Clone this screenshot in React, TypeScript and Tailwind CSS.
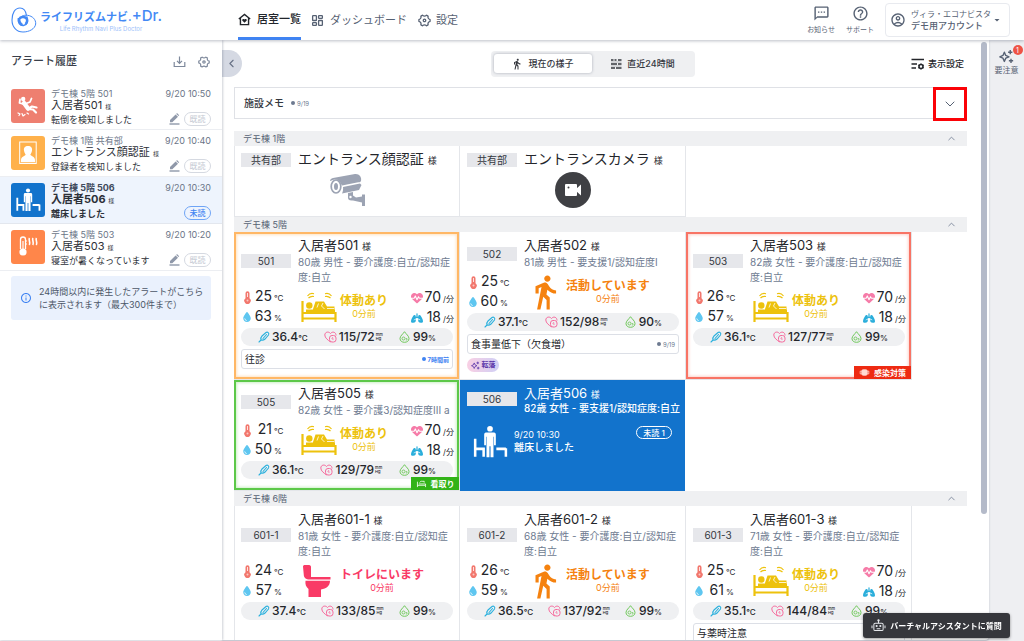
import type { ReactNode } from "react";
import { ChevronDown, ChevronLeft, ChevronUp, LayoutDashboard } from "lucide-react";
import { FaDroplet, FaHeartPulse, FaLungs } from "react-icons/fa6";
import {
  MdArrowDropDown,
  MdDirectionsWalk,
  MdHelpOutline,
  MdInfoOutline,
  MdOutlineAccountCircle,
  MdOutlineTextsms,
} from "react-icons/md";
import { RiSettings4Line } from "react-icons/ri";

/* ---------- drawings ---------- */

function LogoMark() {
  return (
    <svg viewBox="0 0 26 26" className="size-[26px] shrink-0" fill="none" stroke="#4389f5" aria-hidden="true">
      <path d="M12 25C5.500 25 1 20 1 13C1 6 4 1 9 1C13.500 1 15 5 15.500 8.500" strokeWidth="1.100" />
      <path d="M8 13C9 9.500 12.500 7.800 16.500 8.300C21.500 9 25 12.500 24.700 17C24 22 18 25 12 25" strokeWidth="1" />
      <path d="M7.500 11.500C6.500 15.500 9 18.800 12.500 18.500C16 18 17.800 14 15.500 9.500" strokeWidth="1.700" />
      <path d="M8.200 12C9.500 9.800 13 9.200 15 11C16.800 13 16 15.500 14.500 17" strokeWidth="2.400" />
      <path d="M8 11C8 14 9 17 11.500 18" strokeWidth="2.400" />
    </svg>
  );
}

function HomeHeartIcon() {
  return (
    <svg viewBox="0 0 24 24" className="size-[13px]" fill="none" stroke="currentColor" strokeWidth="2.600" aria-hidden="true">
      <path d="M1.500 11L12 2.500L22.500 11M4.500 9V21.500H19.500V9" />
      <path d="M12 18L8.200 14.300C6.500 12.300 9.500 9.500 12 12C14.500 9.500 17.500 12.300 15.800 14.300Z" fill="currentColor" stroke="none" />
    </svg>
  );
}

function DownloadIcon() {
  return (
    <svg viewBox="0 0 13 13" className="size-[13px]" fill="none" stroke="currentColor" strokeWidth="1.200" aria-hidden="true">
      <path d="M6.500 1.500V8M4 5.800L6.500 8.300L9 5.800M1.200 7V11.500H11.800V7" />
    </svg>
  );
}

function TimelineIcon() {
  return (
    <svg viewBox="0 0 12 12" className="size-[12px]" stroke="currentColor" strokeWidth="1.700" aria-hidden="true">
      <path d="M1 2H3.500M4.500 2H6.500M8 2H11.500M1 6H7M8 6H11.500M1 10H5M6 10H11.500" />
      <path d="M1 4H11.500M1 8H11.500" strokeWidth="0.300" />
    </svg>
  );
}

function DisplaySettingsIcon() {
  return (
    <svg viewBox="0 0 14 12" className="h-[12px] w-[14px]" fill="none" stroke="currentColor" strokeWidth="1.300" aria-hidden="true">
      <path d="M0.500 1.500H13M0.500 6H6M0.500 10H5" />
      <circle cx="10" cy="8.500" r="2" strokeWidth="1.600" />
      <path d="M10 5.400V6.200M10 10.800V11.600M7.300 7L8 7.300M12 9.700L12.700 10M12.700 7L12 7.300M8 9.700L7.300 10" />
    </svg>
  );
}

function SparkleIcon({ className }: { className: string }) {
  return (
    <svg viewBox="0 0 14 14" className={className} fill="none" stroke="currentColor" strokeWidth="1.300" aria-hidden="true">
      <path d="M5 3L6.300 6L9.300 7.300L6.300 8.600L5 11.600L3.700 8.600L0.800 7.300L3.700 6Z" strokeLinejoin="round" />
      <path d="M10.500 1V5M8.500 3H12.500M11.200 9V13M9.200 11H13.200" />
    </svg>
  );
}

function PencilIcon() {
  return (
    <svg viewBox="0 0 11 12" className="h-[12px] w-[11px]" fill="#8f98a9" aria-hidden="true">
      <path d="M1 9.300V7L6.600 1.400L9 3.700L3.300 9.300ZM7.200 0.900L8 0.100L10.200 2.300L9.500 3.100Z" />
      <path d="M0.500 10.300H10.500V11.700H0.500Z" />
    </svg>
  );
}

function FallIcon() {
  return (
    <svg viewBox="0 0 34 34" className="size-[34px]" fill="none" stroke="#fff" strokeLinecap="round" strokeLinejoin="round" aria-hidden="true">
      <circle cx="12.200" cy="10" r="2.200" fill="#fff" stroke="none" />
      <path d="M13 14L17 19.500" strokeWidth="4.500" />
      <path d="M12 15L8.500 14L9 10.500M15 14.500L19 13L20.500 9.500" strokeWidth="1.800" />
      <path d="M17 20L21 17.500L25.500 18.500M17 20L22 20.500L25 23.500" strokeWidth="2.200" />
      <path d="M7 24L9 25L8 26.500M11 24.500L12 27L14 25.500M16 24L17.500 25" strokeWidth="1.200" />
    </svg>
  );
}

function FaceIcon() {
  return (
    <svg viewBox="0 0 34 34" className="size-[34px]" aria-hidden="true">
      <rect x="8.700" y="6" width="16.500" height="21.500" fill="none" stroke="#fff" strokeWidth="1" />
      <path d="M17 10C20 10 21.500 12 21 14.500C20.700 16.500 19.800 18 19.300 18.700C20.500 20.500 24 20.500 24 24V26.300H10V24C10 20.500 13.500 20.500 14.700 18.700C14.200 18 13.300 16.500 13 14.500C12.500 12 14 10 17 10Z" fill="#fff" />
    </svg>
  );
}

function LeaveBedIcon({ className }: { className: string }) {
  return (
    <svg viewBox="0 0 34 34" className={className} fill="none" stroke="#fff" aria-hidden="true">
      <path d="M3 14V31M3 23.500H11V31M23 23.500H32M32 23V31" strokeWidth="2.400" />
      <circle cx="17" cy="4.500" r="2.700" fill="#fff" stroke="none" />
      <path d="M11.500 10C11.500 8.500 12.500 8 14 8H20C21.500 8 22.500 8.500 22.500 10V20H20.800V12H20.300V31.500H17.500V21H16.500V31.500H13.700V12H13.200V20H11.500Z" fill="#fff" stroke="none" />
    </svg>
  );
}

function HotRoomIcon() {
  return (
    <svg viewBox="0 0 34 34" className="size-[34px]" fill="none" stroke="#fff" aria-hidden="true">
      <path d="M9.500 19V9.500A2.500 2.500 0 0 1 14.500 9.500V19" strokeWidth="1.300" />
      <circle cx="12" cy="22" r="3.600" fill="#fff" stroke="none" />
      <path d="M12 22V11M14 11H16M14 14H16" strokeWidth="1.200" />
      <path d="M18.500 8C17 10 20 12 18.300 15M22 8C20.500 10 23.500 12 21.800 15M25.500 8C24 10 27 12 25.300 15" strokeWidth="1.600" />
    </svg>
  );
}

function CctvIcon() {
  return (
    <svg viewBox="0 0 38 34" className="h-[34px] w-[38px]" fill="#9ca3b3" aria-hidden="true">
      <path d="M5 5L27 1C31 0.500 34 4 33 8C32.500 9.500 31 9 29 9.500L14 12.500C11 6 8 5 2 8C2 6.500 3 5.500 5 5Z" />
      <path d="M15 14L32 10.500L33.500 12L31 17L14 20.500C15 18.500 15.300 16 15 14Z" />
      <ellipse cx="8" cy="13.500" rx="4.800" ry="6.500" fill="none" stroke="#9ca3b3" strokeWidth="1.700" />
      <ellipse cx="8" cy="13.500" rx="2" ry="3.500" />
      <path d="M20 20L25 19V22.500L28 24.500L34 23.500V21.500H37V33H34V29.500L25 27.500C21 28 19.500 26 20 23.500Z" />
      <circle cx="22.500" cy="24" r="1.200" fill="#fff" />
    </svg>
  );
}

function VideoIcon() {
  return (
    <svg viewBox="0 0 36 36" className="size-[36px]" aria-hidden="true">
      <circle cx="18" cy="18" r="18" fill="#3f4044" />
      <rect x="10" y="12" width="12" height="12" rx="1" fill="#fff" />
      <path d="M21 17L26 12.500V23.500L21 19Z" fill="#fff" />
      <circle cx="13.500" cy="15.500" r="1" fill="#3f4044" />
    </svg>
  );
}

function BedIcon() {
  return (
    <svg viewBox="0 0 36 32" className="h-[32px] w-[36px]" fill="none" stroke="#edc20c" strokeLinejoin="round" aria-hidden="true">
      <path d="M6.500 5C8 3 10.500 2 13 2.800M7.500 7C9 5.500 11 5 13 5.500M24 2.800C26.500 2 29 3 30.500 5M24 5.500C26 5 28 5.500 29.500 7" strokeWidth="1.200" />
      <path d="M1.500 10V31M1.500 22H34.500M2 27.500H34.500M34.500 21V31" strokeWidth="2.200" />
      <circle cx="8.300" cy="14.500" r="3.200" fill="#edc20c" stroke="none" />
      <path d="M5 18.500H34V22H5Z" fill="#edc20c" stroke="none" />
      <path d="M12 18L14.500 10.500H23L26 15.500H33.500V19H12Z" fill="#edc20c" stroke="none" />
      <path d="M16 16.500L17.500 12.500M22 12L20.500 15L23.500 18M26 17.500H33" stroke="#fff" strokeWidth="0.800" />
    </svg>
  );
}

function ToiletIcon() {
  return (
    <svg viewBox="0 0 36 34" className="h-[34px] w-[36px]" fill="#f93a66" aria-hidden="true">
      <path d="M2 2.500C2 1.500 2.800 1 4 1H8C9.500 1 10 2 10 3V13H29.500V15.500H9C4.500 15.500 3 13.500 2.800 11Z" />
      <path d="M4.500 16.800H29C29 22 25.500 24.500 20 25.500V33H7.500V25C5 23 4 20.500 4.500 16.800Z" />
    </svg>
  );
}

function ThermometerIcon() {
  return (
    <svg viewBox="0 0 9 13" className="h-[13px] w-[9px] shrink-0" aria-hidden="true">
      <path d="M2.500 2.300A2 2 0 0 1 6.500 2.300V7.200A3.200 3.200 0 1 1 2.500 7.200Z" fill="#f2776d" />
      <path d="M4.500 2V6" stroke="#fff" strokeWidth="0.800" />
      <circle cx="4.500" cy="9.600" r="1" fill="#fff" fillOpacity="0.600" />
    </svg>
  );
}

function BodyTempIcon() {
  return (
    <svg viewBox="0 0 12 12" className="size-[12px]" fill="none" stroke="#2ab0dd" strokeLinecap="round" aria-hidden="true">
      <path d="M1 11L3 9M3 9C2.500 7 3 6 4 5L8 1.500C9.500 0.500 11.500 2 10.500 4L7 8C6 9 5 9.500 3 9Z" strokeWidth="1.100" />
      <path d="M5 7.500L8.500 3.500" strokeWidth="1.100" />
    </svg>
  );
}

function BloodPressureIcon() {
  return (
    <svg viewBox="0 0 13 12" className="h-[12px] w-[13px]" fill="none" stroke="#f66b9d" strokeWidth="1" aria-hidden="true">
      <path d="M6.500 11C4 9 0.800 7 0.800 4C0.800 1 4.500 0 6.500 2.500C8.500 0 12 1 12 4.500" />
      <rect x="5.500" y="4.500" width="6.500" height="6.500" rx="2.500" />
      <path d="M7.500 7.500L8.700 6.500L9 9" strokeWidth="0.800" />
    </svg>
  );
}

function OxygenIcon() {
  return (
    <svg viewBox="0 0 11 12" className="h-[12px] w-[11px]" fill="none" stroke="#6fc85a" strokeWidth="1" aria-hidden="true">
      <path d="M5.500 0.700C7 3 10 5 10 7.500C10 10 8 11.300 5.500 11.300C3 11.300 1 10 1 7.500C1 5 4 3 5.500 0.700Z" />
      <circle cx="4.500" cy="7.500" r="1.500" strokeWidth="0.900" />
      <path d="M6.800 7.500H8V9H6.800" strokeWidth="0.700" />
    </svg>
  );
}

function MaskIcon() {
  return (
    <svg viewBox="0 0 12 10" className="h-[9px] w-[11px]" fill="none" stroke="#ffd9d2" aria-hidden="true">
      <rect x="3" y="2" width="6" height="6" rx="1.500" fill="#ffd9d2" />
      <path d="M3 3.500H1.200V6.500H3M9 3.500H10.800V6.500H9" strokeWidth="0.900" />
    </svg>
  );
}

function CareBedIcon() {
  return (
    <svg viewBox="0 0 12 10" className="h-[9px] w-[11px]" fill="none" stroke="#fff" strokeWidth="0.900" aria-hidden="true">
      <path d="M1.500 9V3M1.500 7H10.500V9M3 5.500H10.500V7M4 4C5 1.500 7 3 9 2.500L9 4" />
    </svg>
  );
}

function RobotIcon() {
  return (
    <svg viewBox="0 0 16 14" className="h-[13px] w-[15px]" fill="none" stroke="#e5e7eb" strokeWidth="1.100" aria-hidden="true">
      <rect x="3" y="4.500" width="10" height="8" rx="1.500" />
      <path d="M8 4.500V2M1 7V10M15 7V10M6 10.500H10" />
      <circle cx="8" cy="1.500" r="0.700" fill="#e5e7eb" />
      <circle cx="6" cy="7.500" r="0.600" fill="#e5e7eb" />
      <circle cx="10" cy="7.500" r="0.600" fill="#e5e7eb" />
    </svg>
  );
}

/* ---------- header ---------- */

function Header() {
  return (
    <header className="z-20 flex h-10 shrink-0 items-stretch bg-white pr-[14px] pl-[11px] shadow-[0_1px_3px_rgba(60,70,95,0.35)]">
      <a href="#home" className="flex w-[227px] items-center gap-[3px] text-[#4389f5]">
        <LogoMark />
        <span className="flex flex-col">
          <span className="flex items-baseline text-[11px] leading-[15px] font-bold whitespace-nowrap">
            ライフリズムナビ.<span className="text-[15px] font-medium">+Dr.</span>
          </span>
          <span className="text-center text-[6px] leading-[7px] whitespace-nowrap text-[#9cc1fa]">Life Rhythm Navi Plus Doctor</span>
        </span>
      </a>
      <nav className="flex gap-[10px] text-[11px] text-[#566173]">
        <a href="#rooms" className="flex items-center gap-[6px] border-b-3 border-[#3f83f2] pt-[2px] font-medium whitespace-nowrap text-[#22252b]">
          <HomeHeartIcon />
          居室一覧
        </a>
        <a href="#dashboard" className="flex items-center gap-[6px] whitespace-nowrap">
          <LayoutDashboard size={13} strokeWidth={2.4} />
          ダッシュボード
        </a>
        <a href="#settings" className="flex items-center gap-[4px] whitespace-nowrap">
          <RiSettings4Line size={15} />
          設定
        </a>
      </nav>
      <div className="ml-auto flex items-center gap-[11px] text-[#566173]">
        <button type="button" className="flex flex-col items-center gap-[3px] text-[7px] leading-[10px]">
          <MdOutlineTextsms size={17} />
          お知らせ
        </button>
        <button type="button" className="flex flex-col items-center gap-[3px] text-[7px] leading-[10px]">
          <MdHelpOutline size={17} />
          サポート
        </button>
        <button type="button" className="flex h-[34px] items-center rounded border border-[#e8eaef] pr-[6px] pl-[4px] text-left">
          <MdOutlineAccountCircle size={16} />
          <span className="flex flex-col pl-[5px] whitespace-nowrap">
            <span className="text-[8px] leading-[12px]">ヴィラ・エコナビスタ</span>
            <span className="text-[9px] leading-[12px] font-medium">デモ用アカウント</span>
          </span>
          <MdArrowDropDown size={12} />
        </button>
      </div>
    </header>
  );
}

/* ---------- alert history ---------- */

interface Alert {
  place: string;
  time: string;
  name: string;
  message: string;
  tile: string;
  icon: ReactNode;
  unread?: boolean;
}

const alerts: Alert[] = [
  { place: "デモ棟 5階 501", time: "9/20 10:50", name: "入居者501", message: "転倒を検知しました", tile: "bg-[#ee7f70]", icon: <FallIcon /> },
  { place: "デモ棟 1階 共有部", time: "9/20 10:40", name: "エントランス顔認証", message: "登録者を検知しました", tile: "bg-[#ffb14b]", icon: <FaceIcon /> },
  { place: "デモ棟 5階 506", time: "9/20 10:30", name: "入居者506", message: "離床しました", tile: "bg-[#1273cc]", icon: <LeaveBedIcon className="size-[26px]" />, unread: true },
  { place: "デモ棟 5階 503", time: "9/20 10:20", name: "入居者503", message: "寝室が暑くなっています", tile: "bg-[#ff864a]", icon: <HotRoomIcon /> },
];

function AlertRow({ alert }: { alert: Alert }) {
  const unread = alert.unread;
  return (
    <li className={unread ? "flex h-[47px] gap-[6px] border-b border-[#e3e7ee] bg-[#eef4fd] px-[11px] pt-[6px] font-bold" : "flex h-[47px] gap-[6px] border-b border-[#eceef2] px-[11px] pt-[6px]"}>
      <span className={`flex size-[34px] shrink-0 items-center justify-center rounded-[3px] ${alert.tile}`}>{alert.icon}</span>
      <div className="min-w-0 flex-1">
        <div className="flex justify-between text-[9px] leading-[9px] whitespace-nowrap text-[#6b7587]">
          <span className={unread ? "text-[#3f4a5c]" : ""}>{alert.place}</span>
          <time className="font-normal">{alert.time}</time>
        </div>
        <div className="flex items-end justify-between">
          <div className="whitespace-nowrap text-[#2c3038]">
            <p className="text-[11px] leading-[14px]">
              {alert.name} <span className="text-[6px] font-normal">様</span>
            </p>
            <p className="text-[9px] leading-[12px]">{alert.message}</p>
          </div>
          <div className="flex items-center gap-[4px]">
            {!unread && (
              <button type="button" aria-label="メモを編集">
                <PencilIcon />
              </button>
            )}
            <button
              type="button"
              className={
                unread
                  ? "h-[14px] w-[27px] rounded-full border border-[#6ea4f6] text-[8px] leading-[12px] font-medium text-[#3f83f2]"
                  : "h-[14px] w-[27px] rounded-full border border-[#d5d9e1] text-[8px] leading-[12px] text-[#c3c8d2]"
              }
            >
              {unread ? "未読" : "既読"}
            </button>
          </div>
        </div>
      </div>
    </li>
  );
}

function AlertPanel() {
  return (
    <aside className="z-10 w-[222px] shrink-0 bg-white shadow-[1px_0_2px_rgba(60,70,95,0.25)]">
      <div className="flex h-[43px] items-center px-[11px]">
        <h2 className="text-[11px] font-medium text-[#3a3f4a]">アラート履歴</h2>
        <div className="ml-auto flex items-center gap-[11px] text-[#7d889b]">
          <button type="button" aria-label="ダウンロード"><DownloadIcon /></button>
          <button type="button" aria-label="アラート設定"><RiSettings4Line size={14} /></button>
        </div>
      </div>
      <ul>
        {alerts.map((a) => (
          <AlertRow key={a.time} alert={a} />
        ))}
      </ul>
      <div className="mx-[11px] mt-[5px] flex h-[44px] items-center gap-[7px] rounded-[3px] bg-[#eaf1fd] pl-[9px] text-[9px] leading-[13px] text-[#4c5768]">
        <MdInfoOutline size={12} className="shrink-0 text-[#3f83f2]" />
        <p className="whitespace-nowrap">
          24時間以内に発生したアラートがこちら
          <br />
          に表示されます（最大300件まで）
        </p>
      </div>
    </aside>
  );
}

/* ---------- rooms ---------- */

type Activity = "bed" | "walk" | "toilet";

interface Room {
  room: string;
  name: string;
  detail: string;
  temp: number;
  humidity: number;
  activity: Activity;
  breath?: boolean;
  body: string;
  pressure: string;
  oxygen: number;
  note?: { text: string; when?: string; fresh?: boolean };
  tag?: string;
  frame?: "orange" | "red" | "green";
}

const floor5: Room[] = [
  { room: "501", name: "入居者501", detail: "80歳 男性 - 要介護度:自立/認知症\n度:自立", temp: 25, humidity: 63, activity: "bed", breath: true, body: "36.4", pressure: "115/72", oxygen: 99, note: { text: "往診", when: "7時間前", fresh: true }, frame: "orange" },
  { room: "502", name: "入居者502", detail: "81歳 男性 - 要支援1/認知症度I", temp: 25, humidity: 60, activity: "walk", body: "37.1", pressure: "152/98", oxygen: 90, note: { text: "食事量低下（欠食増）", when: "9/19" }, tag: "転落" },
  { room: "503", name: "入居者503", detail: "82歳 女性 - 要介護度:自立/認知症\n度:自立", temp: 26, humidity: 57, activity: "bed", breath: true, body: "36.1", pressure: "127/77", oxygen: 99, frame: "red" },
  { room: "505", name: "入居者505", detail: "82歳 女性 - 要介護3/認知症度III a", temp: 21, humidity: 50, activity: "bed", breath: true, body: "36.1", pressure: "129/79", oxygen: 99, frame: "green" },
];

const floor6: Room[] = [
  { room: "601-1", name: "入居者601-1", detail: "81歳 女性 - 要介護度:自立/認知症\n度:自立", temp: 24, humidity: 57, activity: "toilet", body: "37.4", pressure: "133/85", oxygen: 99 },
  { room: "601-2", name: "入居者601-2", detail: "68歳 女性 - 要介護度:自立/認知症\n度:自立", temp: 26, humidity: 59, activity: "walk", body: "36.5", pressure: "137/92", oxygen: 99 },
  { room: "601-3", name: "入居者601-3", detail: "71歳 女性 - 要介護度:自立/認知症\n度:自立", temp: 25, humidity: 61, activity: "bed", breath: true, body: "35.1", pressure: "144/84", oxygen: 99, note: { text: "与薬時注意" } },
];

const activities: Record<Activity, { label: string; color: string; icon: ReactNode }> = {
  bed: { label: "体動あり", color: "text-[#edc20c]", icon: <BedIcon /> },
  walk: { label: "活動しています", color: "text-[#f5820f]", icon: <MdDirectionsWalk size={38} className="shrink-0" /> },
  toilet: { label: "トイレにいます", color: "text-[#f93a66]", icon: <ToiletIcon /> },
};

const frames = {
  orange: "shadow-[inset_0_0_0_2px_#ffb765,inset_0_0_3px_3px_#ffe3c2]",
  red: "shadow-[inset_0_0_0_2px_#f87465,inset_0_0_3px_3px_#fdd3cd]",
  green: "shadow-[inset_0_0_0_2px_#5cc848,inset_0_0_3px_3px_#cdf0c6]",
};

function RoomLabel({ children }: { children: ReactNode }) {
  return <span className="flex h-[14px] w-[50px] shrink-0 items-center justify-center bg-[#e6e7eb] text-[10px] leading-[14px] text-[#34373e]">{children}</span>;
}

function Honorific() {
  return <span className="text-[9px]">様</span>;
}

function Reading({ icon, value, unit }: { icon: ReactNode; value: string | number; unit: string }) {
  return (
    <div className="flex h-5 items-center">
      <span className="flex w-[12px] shrink-0 justify-center">{icon}</span>
      <p className="ml-auto flex items-baseline gap-[2px] text-[14px] leading-5 whitespace-nowrap">
        {value}
        <span className="w-[10px] text-[8px]">{unit}</span>
      </p>
    </div>
  );
}

function RoomCard({ data }: { data: Room }) {
  const act = activities[data.activity];
  return (
    <article className={`relative min-h-[111px] w-[226px] border-r border-b border-[#e4e6ea] pt-[5px] pr-[6px] pb-[7px] pl-[7px] text-[#24262b] ${data.frame ? frames[data.frame] : ""}`}>
      <div className="flex items-center gap-[7px]">
        <RoomLabel>{data.room}</RoomLabel>
        <div className="whitespace-nowrap">
          <h3 className="text-[13px] leading-4">
            {data.name} <Honorific />
          </h3>
          <p className="text-[10px] leading-[15px] whitespace-pre text-[#6d7a90]">{data.detail}</p>
        </div>
      </div>
      <div className="mt-[2px] flex h-10">
        <div className="w-[43px]">
          <Reading icon={<ThermometerIcon />} value={data.temp} unit="℃" />
          <Reading icon={<FaDroplet size={10} className="text-[#5ec6f0]" />} value={data.humidity} unit="%" />
        </div>
        <div className={`ml-[17px] flex items-center gap-[3px] ${act.color}`}>
          <span className="flex w-[36px] justify-center">{act.icon}</span>
          <div className="pb-[2px] text-center whitespace-nowrap">
            <p className="text-[12px] leading-[15px] font-bold">{act.label}</p>
            <p className="text-[9px] leading-[12px]">0分前</p>
          </div>
        </div>
        {data.breath && (
          <div className="ml-auto w-[42px] pt-px">
            <Reading icon={<FaHeartPulse size={12} className="text-[#f67ba8]" />} value={70} unit="/分" />
            <Reading icon={<FaLungs size={12} className="text-[#2aaedb]" />} value={18} unit="/分" />
          </div>
        )}
      </div>
      <div className="mt-px flex h-[18px] items-center justify-between rounded-full bg-[#eff0f2] px-[17px] text-[12px] font-medium">
        <span className="flex items-center gap-[2px]">
          <BodyTempIcon />
          <span>
            {data.body}
            <span className="text-[8px]">℃</span>
          </span>
        </span>
        <span className="flex items-center gap-[2px]">
          <BloodPressureIcon />
          {data.pressure}
          <span className="-ml-px text-[4px] leading-[4px]">
            mm
            <br />
            Hg
          </span>
        </span>
        <span className="flex items-center gap-[3px]">
          <OxygenIcon />
          <span>
            {data.oxygen}
            <span className="text-[8px]">%</span>
          </span>
        </span>
      </div>
      {data.note && (
        <div className="mt-[3px] flex h-5 items-center justify-between rounded-[3px] border border-[#dcdfe6] bg-white px-[3px] text-[10px] whitespace-nowrap">
          <span>{data.note.text}</span>
          {data.note.when && (
            <span className={data.note.fresh ? "flex items-center gap-[2px] text-[6px] font-bold text-[#3f83f2]" : "flex items-center gap-[2px] text-[6px] text-[#6d7a90]"}>
              <span className="size-[4px] rounded-full bg-current" />
              {data.note.when}
            </span>
          )}
        </div>
      )}
      {data.tag && (
        <span className="mt-[4px] flex h-[14px] w-[32px] items-center justify-center gap-[2px] rounded-full bg-linear-to-r from-[#f9cfe3] to-[#cfcff5] text-[7px] font-bold text-[#5a35a8]">
          <SparkleIcon className="size-[9px]" />
          {data.tag}
        </span>
      )}
      {data.frame === "red" && (
        <span className="absolute right-0 bottom-0 flex h-[13px] w-[57px] items-center justify-center gap-[4px] bg-[#ee2a12] text-[8px] font-bold whitespace-nowrap text-white">
          <MaskIcon />
          感染対策
        </span>
      )}
      {data.frame === "green" && (
        <span className="absolute right-0 bottom-0 flex h-[13px] w-[48px] items-center justify-center gap-[4px] bg-[#32b318] text-[8px] font-bold whitespace-nowrap text-white">
          <CareBedIcon />
          看取り
        </span>
      )}
    </article>
  );
}

function AlertingCard() {
  return (
    <article className="w-[226px] border-r border-white bg-[#1273cc] px-[7px] pt-[5px] text-white">
      <div className="flex items-center gap-[7px]">
        <RoomLabel>506</RoomLabel>
        <div className="whitespace-nowrap">
          <h3 className="text-[13px] leading-4">
            入居者506 <Honorific />
          </h3>
          <p className="text-[10px] leading-[10px] font-medium">82歳 女性 - 要支援1/認知症度:自立</p>
        </div>
      </div>
      <div className="mt-[11px] flex h-[36px] pl-[5px]">
        <LeaveBedIcon className="size-[36px]" />
        <div className="pt-[4px] pl-[6px]">
          <p className="text-[9px] leading-[13px]">9/20 10:30</p>
          <p className="text-[10px] leading-[13px] font-medium">離床しました</p>
        </div>
        <span className="mt-[2px] mr-[6px] ml-auto flex h-[13px] w-[36px] items-center justify-center rounded-full border border-white text-[8px] font-medium">未読 1</span>
      </div>
    </article>
  );
}

function CommonCard({ name, icon }: { name: string; icon: ReactNode }) {
  return (
    <article className="h-[71px] w-[226px] border-r border-b border-[#e4e6ea] px-[7px] pt-[3px] text-[#24262b]">
      <div className="flex items-center gap-[7px]">
        <RoomLabel>共有部</RoomLabel>
        <h3 className="text-[14px] leading-5 whitespace-nowrap">
          {name} <Honorific />
        </h3>
      </div>
      <div className="mt-px flex h-[36px] items-center justify-center">{icon}</div>
    </article>
  );
}

function Floor({ title, children }: { title: string; children: ReactNode }) {
  return (
    <section>
      <div className="flex h-[15px] items-center justify-between bg-[#eff0f2] pr-[10px] pl-[9px]">
        <h2 className="text-[9px] leading-[15px] text-[#566173]">{title}</h2>
        <button type="button" aria-label={`${title}を閉じる`} className="text-[#7d889b]">
          <ChevronUp size={11} />
        </button>
      </div>
      <div className="flex flex-wrap shadow-[inset_1px_0_0_#e4e6ea]">{children}</div>
    </section>
  );
}

function Toolbar() {
  return (
    <div className="relative flex h-[47px] shrink-0 items-center justify-center pr-[16px]">
      <div className="flex h-[26px] items-center gap-[2px] rounded-[4px] bg-[#eff0f2] px-[3px] text-[9px] font-medium text-[#34373e]">
        <button type="button" className="flex h-[19px] w-[98px] items-center justify-center gap-[5px] rounded-[3px] bg-white shadow-[0_0_3px_rgba(60,70,95,0.4)]">
          <MdDirectionsWalk size={12} />
          現在の様子
        </button>
        <button type="button" className="flex h-[19px] w-[98px] items-center justify-center gap-[5px]">
          <TimelineIcon />
          直近24時間
        </button>
      </div>
      <button type="button" className="absolute right-[3px] flex items-center gap-[3px] text-[9px] font-medium text-[#24262b]">
        <DisplaySettingsIcon />
        表示設定
      </button>
    </div>
  );
}

function MemoBar() {
  return (
    <div className="relative flex h-[32px] items-center gap-[7px] border border-[#dfe1e6] pl-[9px]">
      <h2 className="text-[10px] font-medium text-[#34373e]">施設メモ</h2>
      <span className="flex items-center gap-[2px] text-[6px] text-[#6d7a90]">
        <span className="size-[4px] rounded-full bg-current" />
        9/19
      </span>
      <button type="button" aria-label="施設メモを開く" className="absolute -top-px -right-px flex size-[34px] items-center justify-center border-3 border-[#fb0207] bg-white text-[#566173]">
        <ChevronDown size={16} strokeWidth={1.5} />
      </button>
    </div>
  );
}

export default function App() {
  return (
    <div lang="ja" className="flex h-screen flex-col overflow-hidden bg-[#eeeff2] [font-family:Inter,'Noto_Sans_CJK_JP',sans-serif]">
      <Header />
      <div className="flex min-h-0 flex-1 pb-px">
        <AlertPanel />
        <main className="relative flex min-w-0 flex-1 rounded-br-[4px] bg-white pl-[12px] shadow-[0_1px_2px_rgba(60,70,95,0.3)]">
          <button type="button" aria-label="パネルを閉じる" className="absolute top-[10px] left-0 flex h-[27px] w-[20px] items-center rounded-r-full bg-[#d5d9e3] pl-[3px] text-[#667085]">
            <ChevronLeft size={13} />
          </button>
          <div className="min-w-0 flex-1 overflow-hidden">
            <Toolbar />
            <MemoBar />
            <div className="mt-[12px]">
              <Floor title="デモ棟 1階">
                <CommonCard name="エントランス顔認証" icon={<CctvIcon />} />
                <CommonCard name="エントランスカメラ" icon={<VideoIcon />} />
              </Floor>
              <Floor title="デモ棟 5階">
                {floor5.map((r) => (
                  <RoomCard key={r.room} data={r} />
                ))}
                <AlertingCard />
              </Floor>
              <Floor title="デモ棟 6階">
                {floor6.map((r) => (
                  <RoomCard key={r.room} data={r} />
                ))}
              </Floor>
            </div>
          </div>
          <div className="w-[22px] shrink-0 pt-[2px] pl-[14px]">
            <div className="h-[79%] w-[6px] rounded-full bg-[#b4bac9]" />
          </div>
        </main>
        <aside className="flex w-[35px] shrink-0 justify-center pt-[9px]">
          <button type="button" className="relative flex h-fit flex-col items-center text-[8px] leading-[12px] text-[#566173]">
            <SparkleIcon className="size-[15px]" />
            要注意
            <span className="absolute -top-[4px] -right-[4px] flex size-[10px] items-center justify-center rounded-full bg-[#ee5346] text-[7px] leading-none text-white">1</span>
          </button>
        </aside>
      </div>
      <button type="button" className="fixed right-[14px] bottom-[3px] z-30 flex h-[25px] w-[147px] items-center justify-center gap-[4px] rounded-[3px] bg-[#36373c] text-[8px] font-bold whitespace-nowrap text-white shadow-[0_1px_3px_rgba(0,0,0,0.4)]">
        <RobotIcon />
        バーチャルアシスタントに質問
      </button>
    </div>
  );
}
